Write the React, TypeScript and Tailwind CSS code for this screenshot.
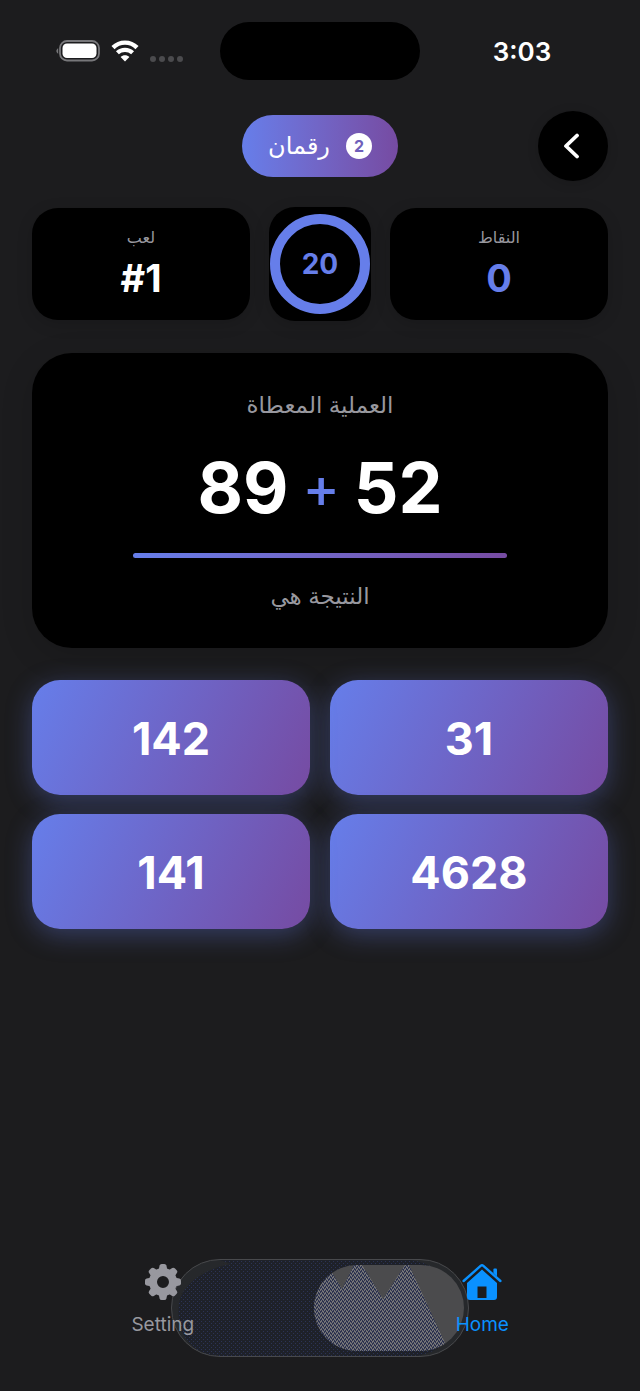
import React from 'react';

const ANSWERS = [31, 142, 4628, 141];

const BatteryIcon = () => (
  <svg width="44" height="22" viewBox="0 0 44 22" aria-hidden="true">
    <path d="M2.2 8.2C-.2 9.4-.2 12.6 2.2 13.8Z" fill="#77777a" />
    <rect x="4" y="1" width="39" height="19.5" rx="7" fill="none" stroke="#77777a" strokeWidth="1.8" />
    <rect x="6.5" y="3.5" width="34" height="14.5" rx="4.5" fill="#fff" />
  </svg>
);

const WifiIcon = () => (
  <svg width="28" height="22" viewBox="0 0 28 22" fill="none" aria-hidden="true">
    <path d="M2 7.6C8.6 1 19.4 1 26 7.6" stroke="#fff" strokeWidth="4.4" />
    <path d="M6.4 12.8C10.6 8.8 17.4 8.8 21.6 12.8" stroke="#fff" strokeWidth="4.2" />
    <path d="M14 21.4L9.6 17C12 14.6 16 14.6 18.4 17Z" fill="#fff" />
  </svg>
);

const GearIcon = () => (
  <svg width="36" height="36" viewBox="0 0 36 36" fill="none" aria-hidden="true">
    <circle cx="18" cy="18" r="10" stroke="#98989f" strokeWidth="8" />
    {[0, 45, 90, 135, 180, 225, 270, 315].map((angle) => (
      <path
        key={angle}
        d="M13.4 7L14.6 1.6Q15 0 16.6 0H19.4Q21 0 21.4 1.6L22.6 7Z"
        fill="#98989f"
        transform={`rotate(${angle} 18 18)`}
      />
    ))}
  </svg>
);

const HomeIcon = () => (
  <svg width="40" height="36" viewBox="0 0 40 36" aria-hidden="true">
    <path d="M1.6 17L18.6 1.9Q20 .8 21.4 1.9L38.4 17" fill="none" stroke="#0a91ff" strokeWidth="2.4" strokeLinecap="round" strokeLinejoin="round" />
    <path d="M31.4 9V5.5Q31.4 4.5 32.4 4.5H34Q35 4.5 35 5.5V12.4Z" fill="#0a91ff" />
    <path fillRule="evenodd" d="M5 19L20 5.6L35 19V33Q35 36 32 36H8Q5 36 5 33ZM15.5 22.5V34H24.5V22.5Z" fill="#0a91ff" />
  </svg>
);

// Glass tab bar backdrop with the highlighted thumb
const TabBackdrop = () => (
  <svg width="298" height="98" viewBox="0 0 298 98" aria-hidden="true">
    <defs>
      <pattern id="track" width="4" height="4" patternUnits="userSpaceOnUse">
        <rect width="4" height="4" fill="#1e2129" />
        <rect width="1" height="1" fill="#2c3355" />
        <rect x="2" y="2" width="1" height="1" fill="#2c3355" />
      </pattern>
      <pattern id="thumb" width="4" height="4" patternUnits="userSpaceOnUse">
        <rect width="4" height="4" fill="#2d3350" />
        <path d="M0 0h1v2h-1zM2 1h1v2h-1zM1 2h1v2h-1zM3 3h1v1h-1zM3 0h1v1h-1z" fill="#747476" />
      </pattern>
      <clipPath id="thumb-clip">
        <rect x="143" y="6" width="150" height="86" rx="43" />
      </clipPath>
    </defs>
    <rect x=".5" y=".5" width="297" height="97" rx="48.5" fill="#26282b" />
    <path d="M49 1H240C262 4 288 20 288 49C288 78 266 97 240 97H49C18 97 4 70 8 44C12 22 40 8 60 5Z" fill="url(#track)" />
    <rect x=".5" y=".5" width="297" height="97" rx="48.5" fill="none" stroke="#48494c" />
    <g clipPath="url(#thumb-clip)">
      <rect x="143" y="6" width="150" height="86" fill="#4b4b4d" />
      <path d="M143 6L160 12L171 30L183 6H191L212 40L234 6H238L274 84L270 92H143Z" fill="url(#thumb)" />
    </g>
  </svg>
);

interface StatCardProps {
  label: string;
  value: string;
  valueClass: string;
}

const StatCard: React.FC<StatCardProps> = ({ label, value, valueClass }) => (
  <div className="flex h-28 flex-1 flex-col items-center justify-center rounded-[26px] bg-black pt-1 shadow-[0_4px_16px_rgba(0,0,0,0.15)]">
    <span className="text-base leading-6 text-[#98989f]">{label}</span>
    <span dir="ltr" className={`text-[38px] leading-[58px] font-bold ${valueClass}`}>
      {value}
    </span>
  </div>
);

export default function App() {
  return (
    <div
      dir="rtl"
      className="flex min-h-screen flex-col bg-[#1c1c1e] font-['Inter','DejaVu_Sans',sans-serif] text-white"
    >
      <div className="grid grid-cols-[1fr_200px_1fr] items-center pt-[22px]">
        <time className="ps-4 pt-0.5 text-center text-[26px] leading-8 font-semibold">3:03</time>
        <div className="h-[58px] rounded-full bg-black" />
        <div dir="ltr" className="flex items-center justify-center gap-[11px] ps-[18px]">
          <BatteryIcon />
          <WifiIcon />
          <div className="flex gap-[3px] pt-4">
            {[0, 1, 2, 3].map((dot) => (
              <span key={dot} className="size-[6px] rounded-full bg-[#4b4b4e]" />
            ))}
          </div>
        </div>
      </div>

      <header className="mt-[31px] grid grid-cols-[1fr_auto_1fr] items-center px-8">
        <button
          type="button"
          aria-label="رجوع"
          className="flex size-[70px] items-center justify-center rounded-full bg-black shadow-[0_2px_12px_rgba(0,0,0,0.15)]"
        >
          <svg width="20" height="26" viewBox="0 0 20 26" fill="none" aria-hidden="true">
            <path d="M14 2.5L3 13L14 23.5" stroke="#fff" strokeWidth="3.8" strokeLinecap="round" strokeLinejoin="round" />
          </svg>
        </button>
        <div className="flex h-[62px] items-center gap-4 rounded-full bg-linear-to-r from-[#667eea] to-[#764ba2] px-[26px]">
          <span className="flex size-[26px] items-center justify-center rounded-full bg-white text-base font-bold text-[#6f5fba]">
            2
          </span>
          <h1 className="text-2xl font-medium">رقمان</h1>
        </div>
      </header>

      <main className="px-8 pt-[26px]">
        <section className="flex items-center gap-[19px]">
          <StatCard label="النقاط" value="0" valueClass="text-[#667eea]" />
          <div className="flex h-[114px] w-[102px] items-center justify-center rounded-[26px] bg-black shadow-[0_4px_16px_rgba(0,0,0,0.15)]">
            <div className="flex size-[100px] items-center justify-center rounded-full border-10 border-[#667eea] text-[28px] font-bold text-[#667eea]">
              20
            </div>
          </div>
          <StatCard label="لعب" value="#1" valueClass="text-white" />
        </section>

        <section className="mt-8 flex flex-col items-center rounded-[40px] bg-black pt-8 pb-8 shadow-[0_8px_32px_rgba(0,0,0,0.15)]">
          <h2 className="text-[23px] leading-10 text-[#98989f]">العملية المعطاة</h2>
          <p dir="ltr" className="mt-[17px] flex items-center gap-3.5 text-[70px] leading-[92px] font-bold">
            <span>89</span>
            <span className="text-[56px] font-medium text-[#667eea]">+</span>
            <span>52</span>
          </p>
          <div className="mt-[19px] h-[5px] w-[65%] rounded-full bg-linear-to-r from-[#667eea] to-[#764ba2]" />
          <p className="mt-[18px] text-[23px] leading-10 text-[#98989f]">النتيجة هي</p>
        </section>

        <section className="mt-8 grid grid-cols-2 gap-x-5 gap-y-[19px]">
          {ANSWERS.map((answer) => (
            <button
              key={answer}
              type="button"
              className="h-[115px] rounded-[28px] bg-linear-[115deg] from-[#667eea] to-[#764ba2] pt-0.5 text-[45px] font-bold shadow-[0_6px_26px_rgba(102,126,234,0.35)]"
            >
              {answer}
            </button>
          ))}
        </section>
      </main>

      <nav className="relative mt-auto mb-[34px] flex h-[98px] items-start gap-1 pt-[5px] pl-[5px]">
        <div className="absolute inset-y-0 left-1/2 -translate-x-1/2">
          <TabBackdrop />
        </div>
        <a href="#home" className="relative flex flex-1 flex-col items-center gap-[11px] text-[19px] leading-7 text-[#0a91ff]">
          <HomeIcon />
          Home
        </a>
        <a href="#setting" className="relative flex flex-1 flex-col items-center gap-[11px] text-[19px] leading-7 text-[#98989f]">
          <GearIcon />
          Setting
        </a>
      </nav>
    </div>
  );
}
